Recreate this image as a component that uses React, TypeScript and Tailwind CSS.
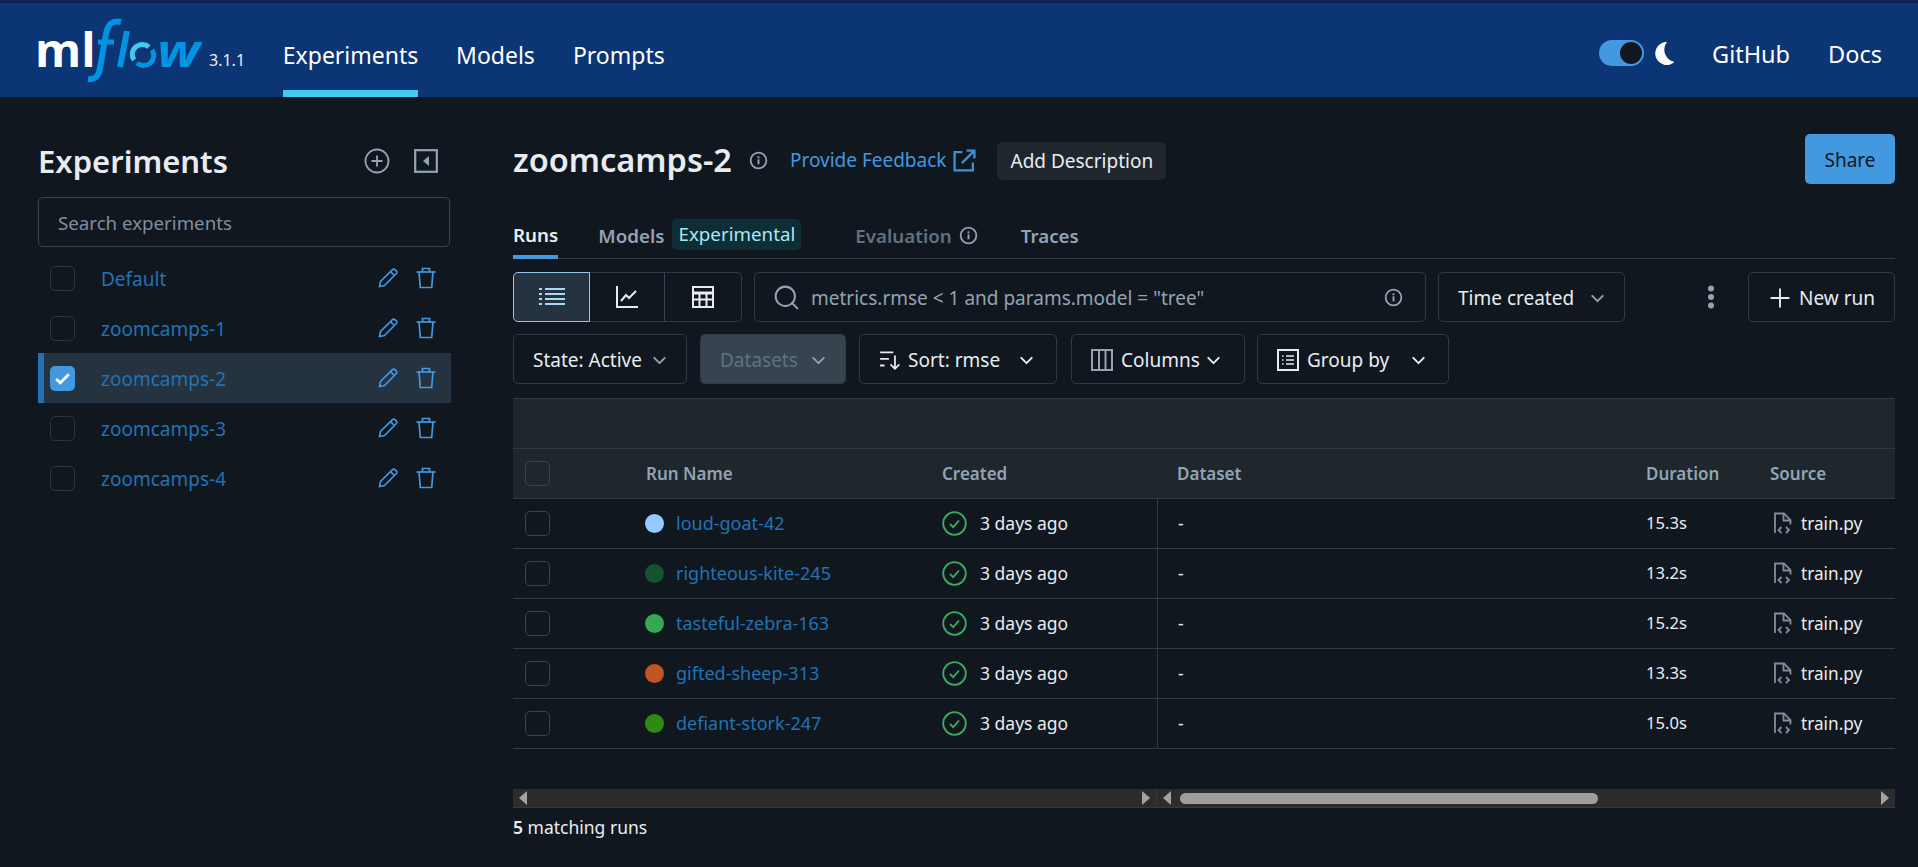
import React from 'react';
import { ChevronDown, Plus, Search } from 'lucide-react';

const FONT = "font-['Noto_Sans','Open_Sans',sans-serif]";

const experiments = ['Default', 'zoomcamps-1', 'zoomcamps-2', 'zoomcamps-3', 'zoomcamps-4'];

const runs = [
  { name: 'loud-goat-42', color: '#93c9ff', duration: '15.3s' },
  { name: 'righteous-kite-245', color: '#14532d', duration: '13.2s' },
  { name: 'tasteful-zebra-163', color: '#34a853', duration: '15.2s' },
  { name: 'gifted-sheep-313', color: '#c2541f', duration: '13.3s' },
  { name: 'defiant-stork-247', color: '#2f8a12', duration: '15.0s' },
];

const Logo = () => (
  <svg width="172" height="70" viewBox="30 15 172 70" className="shrink-0">
    <text x="34" y="67" fill="#fff" fontFamily="Open Sans" fontWeight="700" fontSize="47">ml</text>
    <path d="M120 22c-9-2-13 2-15 12l-6 34c-1 8-5 12-12 11" fill="none" stroke="#0194e2" strokeWidth="6" />
    <path d="M97 42h16" fill="none" stroke="#0194e2" strokeWidth="5" />
    <path d="M126 31l-7 36" fill="none" stroke="#0194e2" strokeWidth="6" />
    <path d="M133 60a10 10 0 0 1 15-13" fill="none" stroke="#43c9ed" strokeWidth="5" />
    <path d="M151 50a10 10 0 0 1-15 13" fill="none" stroke="#0194e2" strokeWidth="5" />
    <text x="156" y="67" fill="#0194e2" fontFamily="Open Sans" fontStyle="italic" fontWeight="700" fontSize="44" textLength="43" lengthAdjust="spacingAndGlyphs">w</text>
  </svg>
);

const InfoIcon = ({ className }: { className?: string }) => (
  <svg viewBox="0 0 16 16" className={className} fill="none">
    <circle cx="8" cy="8" r="6.6" stroke="currentColor" strokeWidth="1.5" />
    <rect x="7.2" y="7" width="1.6" height="4.2" fill="currentColor" />
    <rect x="7.2" y="4.5" width="1.6" height="1.6" fill="currentColor" />
  </svg>
);

const PencilIcon = () => (
  <svg viewBox="0 0 20 20" className="w-[20px] h-[20px] text-[#4299e0]" fill="none" stroke="currentColor" strokeWidth="1.6">
    <path d="M1.5 18.5l1-5L14.5 1.6c.7-.7 1.7-.7 2.4 0l1.5 1.5c.7.7.7 1.7 0 2.4L6.5 17.5z" />
    <path d="M12.5 3.6l3.9 3.9" />
  </svg>
);

const TrashIcon = () => (
  <svg viewBox="0 0 20 22" className="w-[20px] h-[22px] text-[#4299e0]" fill="none" stroke="currentColor" strokeWidth="1.7">
    <path d="M0.5 5h19" />
    <path d="M6.5 5V1.5h7V5" />
    <path d="M3 5l1.3 15.5h11.4L17 5" />
  </svg>
);

const Checkbox = ({ checked, table }: { checked?: boolean; table?: boolean }) =>
  checked ? (
    <span className="flex items-center justify-center w-[25px] h-[25px] rounded-[5px] bg-[#4299e0] shrink-0">
      <svg viewBox="0 0 16 16" className="w-[17px] h-[17px]" fill="none" stroke="#fff" strokeWidth="2.6">
        <path d="M2 8.5l4 3.5 8-8" />
      </svg>
    </span>
  ) : (
    <span className={`block w-[25px] h-[25px] rounded-[5px] border shrink-0 ${table ? 'border-[#37444f] border-[1.5px]' : 'border-[#2c353e]'}`} />
  );

const SortIcon = () => (
  <svg viewBox="0 0 20 20" className="w-[22px] h-[22px] text-[#e8ecf0]" fill="none" stroke="currentColor" strokeWidth="1.6">
    <path d="M1 3h12M1 9h8M1 15h4" />
    <path d="M14.5 6v12M10.5 14l4 4 4-4" />
  </svg>
);

const ColumnsIcon = () => (
  <svg viewBox="0 0 22 22" className="w-[22px] h-[22px] text-[#92a4b3]" fill="none" stroke="currentColor" strokeWidth="2">
    <rect x="1" y="1" width="20" height="20" />
    <path d="M8 1v20M14.5 1v20" />
  </svg>
);

const GroupIcon = () => (
  <svg viewBox="0 0 22 22" className="w-[22px] h-[22px] text-[#e8ecf0]" fill="none" stroke="currentColor" strokeWidth="2">
    <rect x="1" y="1" width="20" height="20" />
    <path d="M9 7h8M9 11h8M9 15h8M5 7h1.5M5 11h1.5M5 15h1.5" strokeWidth="1.6" />
  </svg>
);

const FileCodeIcon = () => (
  <svg viewBox="0 0 19 22" className="w-[19px] h-[22px] text-[#7d8f9e]" fill="none" stroke="currentColor" strokeWidth="1.8">
    <path d="M2 21V1.5h9l6.5 6.5v4.5" />
    <path d="M10.5 1.5v7h7" />
    <path d="M8.5 15l-3 3 3 3M13 15l3 3-3 3" />
  </svg>
);

const StatusIcon = () => (
  <svg viewBox="0 0 25 25" className="w-[25px] h-[25px] text-[#3caa60]" fill="none" stroke="currentColor">
    <circle cx="12.5" cy="12.5" r="11.3" strokeWidth="1.8" />
    <path d="M8 13l3.2 3.2L17 9.5" strokeWidth="1.8" />
  </svg>
);

const ToolButton = ({ width, children, disabled }: { width: string; children: React.ReactNode; disabled?: boolean }) => (
  <div
    className={`${width} h-[50px] shrink-0 flex items-center rounded-[5px] border border-[#2e3a45] px-[19px] pt-[2px] text-[19px] ${
      disabled ? 'bg-[#37444f] text-[#5f7281]' : 'text-[#e8ecf0]'
    }`}
  >
    {children}
  </div>
);

const Chevron = ({ className = '' }: { className?: string }) => (
  <ChevronDown className={`w-[21px] h-[21px] shrink-0 ${className}`} strokeWidth={2.2} />
);

const ScrollArrow = ({ left }: { left?: boolean }) => (
  <span
    className={`block w-0 h-0 border-y-[7px] border-y-transparent ${
      left ? 'border-r-[8px] border-r-[#a3a3a3]' : 'border-l-[8px] border-l-[#a3a3a3]'
    }`}
  />
);

export default function App() {
  return (
    <div className={`${FONT} w-[1918px] h-[867px] overflow-hidden bg-[#11171f] text-[19px] text-[#e8ecf0]`}>
      <header className="h-[97px] border-t-[3px] border-[#121d52] bg-[#0b3574] flex items-stretch pl-[31px] pr-[36px] text-white">
        <div className="flex items-center">
          <Logo />
          <span className="ml-[6px] mt-[20px] text-[16px] text-[#e8ecf0]">3.1.1</span>
        </div>
        <nav className="flex ml-[38px] text-[23px]">
          <a className="w-[135px] flex items-center justify-center border-b-[7px] border-[#43c9ed] pt-[17px]">Experiments</a>
          <a className="ml-[38px] flex items-center pt-[10px]">Models</a>
          <a className="ml-[38px] flex items-center pt-[10px]">Prompts</a>
        </nav>
        <div className="ml-auto flex items-center text-[23.5px] pt-[6px]">
          <span className="relative block w-[45px] h-[26px] rounded-full bg-[#4299e0]">
            <span className="absolute right-[2px] top-[2px] w-[22px] h-[22px] rounded-full bg-[#11171f]" />
          </span>
          <svg viewBox="0 0 20 24" className="ml-[11px] w-[20px] h-[24px]">
            <path d="M12 1a11.5 11.5 0 1 0 7.5 20A12.5 12.5 0 0 1 12 1z" fill="#fff" />
          </svg>
          <a className="ml-[37px] pt-[4px]">GitHub</a>
          <a className="ml-[38px] pt-[4px]">Docs</a>
        </div>
      </header>

      <div className="flex">
        <aside className="w-[513px] shrink-0 pl-[38px] pt-[37px]">
          <div className="w-[412px] flex items-center h-[63px] pb-[9px]">
            <h1 className="text-[31px] font-semibold leading-none">Experiments</h1>
            <svg viewBox="0 0 26 26" className="ml-auto w-[26px] h-[26px] text-[#92a4b3]" fill="none" stroke="currentColor" strokeWidth="1.8">
              <circle cx="13" cy="13" r="11.5" />
              <path d="M13 7.5v11M7.5 13h11" />
            </svg>
            <svg viewBox="0 0 24 24" className="ml-[24px] mr-[12px] w-[24px] h-[24px] text-[#92a4b3]" fill="none">
              <rect x="1.2" y="1.2" width="21.6" height="21.6" stroke="currentColor" strokeWidth="2.2" />
              <path d="M15 7v10l-6-5z" fill="currentColor" />
            </svg>
          </div>
          <div className="w-[412px] h-[50px] rounded-[5px] border border-[#37444f] flex items-center px-[19px] pt-[2px] text-[18.7px] text-[#7d8f9e]">
            Search experiments
          </div>
          <ul className="mt-[6px] w-[413px]">
            {experiments.map((name) => {
              const selected = name === 'zoomcamps-2';
              return (
                <li
                  key={name}
                  className={`h-[50px] flex items-center pl-[6px] border-l-[6px] ${
                    selected ? 'border-[#2272b4] bg-[#24333f]' : 'border-transparent'
                  }`}
                >
                  <Checkbox checked={selected} />
                  <span className="ml-[26px] pt-[2px] text-[#2272b4]">{name}</span>
                  <span className="ml-auto flex items-center gap-[18px] pr-[15px]">
                    <PencilIcon />
                    <TrashIcon />
                  </span>
                </li>
              );
            })}
          </ul>
        </aside>

        <main className="flex-1 pr-[23px] pt-[37px] min-w-0">
          <div className="flex items-start h-[83px]">
            <div className="flex items-center h-[50px] pt-[3px]">
              <h2 className="text-[32.5px] font-semibold leading-none whitespace-nowrap">zoomcamps-2</h2>
              <InfoIcon className="ml-[17px] w-[19px] h-[19px] text-[#92a4b3]" />
              <a className="ml-[22px] text-[19px] text-[#4299e0] whitespace-nowrap">Provide Feedback</a>
              <svg viewBox="0 0 22 22" className="ml-[7px] w-[23px] h-[23px] text-[#3d8fd6]" fill="none" stroke="currentColor" strokeWidth="2.2">
                <path d="M9 3H1.5v17.5H19V13" />
                <path d="M8.5 13.5L20 2M13 1.5h7.5V9" />
              </svg>
              <span className="ml-[21px] h-[38px] flex items-center px-[13px] pt-[2px] rounded-[5px] bg-[#1f272d] whitespace-nowrap">
                Add Description
              </span>
            </div>
            <div className="ml-auto w-[90px] h-[50px] pt-[2px] flex items-center justify-center rounded-[5px] bg-[#4299e0] text-[#11171f]">
              Share
            </div>
          </div>

          <div className="h-[42px] flex items-stretch border-b border-[#2e3a45] text-[18.75px] font-semibold text-[#92a4b3]">
            <span className="text-[#e8ecf0] border-b-[4px] border-[#4299e0] -mb-px flex items-center pb-[2px]">Runs</span>
            <span className="ml-[40px] flex items-center pb-[2px]">Models</span>
            <span className="ml-[8px] my-auto h-[31px] mb-[8px] flex items-center px-[6px] rounded-[5px] bg-[#0f2d35] text-[#a3eaf7] font-normal">
              Experimental
            </span>
            <span className="ml-[54px] flex items-center pb-[2px] text-[#5f7281]">Evaluation</span>
            <InfoIcon className="ml-[7px] mt-[9px] w-[19px] h-[19px] text-[#92a4b3]" />
            <span className="ml-[43px] flex items-center pb-[2px]">Traces</span>
          </div>

          <div className="mt-[13px] flex items-center">
            <div className="flex h-[50px] w-[229px] shrink-0 rounded-[5px] border border-[#2e3a45]">
              <span className="w-[77px] -ml-px -my-px flex items-center justify-center rounded-l-[5px] border border-[#8fc7ee] bg-[#24333f]">
                <svg viewBox="0 0 26 20" className="w-[26px] h-[20px] text-[#a8d8f8]" fill="none" stroke="currentColor" strokeWidth="2">
                  <path d="M6 2h20M6 7h20M6 12h20M6 17h20M0 2h3M0 7h3M0 12h3M0 17h3" />
                </svg>
              </span>
              <span className="w-[75px] flex items-center justify-center border-r border-[#37444f]">
                <svg viewBox="0 0 24 24" className="w-[24px] h-[24px]" fill="none" stroke="currentColor" strokeWidth="2">
                  <path d="M2 1v21h21M6 16l5-6 3 3 7-7" />
                </svg>
              </span>
              <span className="flex-1 flex items-center justify-center">
                <svg viewBox="0 0 24 24" className="w-[24px] h-[24px]" fill="none" stroke="currentColor" strokeWidth="2">
                  <rect x="2" y="2" width="20" height="20" />
                  <path d="M2 8h20" strokeWidth="3" />
                  <path d="M2 14.5h20M8.5 8v14M15.5 8v14" />
                </svg>
              </span>
            </div>
            <div className="ml-[12px] w-[672px] h-[50px] shrink-0 flex items-center rounded-[5px] border border-[#2e3a45] pl-[17px] pr-[22px] text-[#92a4b3]">
              <Search className="w-[29px] h-[29px] text-[#92a4b3] shrink-0" strokeWidth={1.7} />
              <span className="ml-[10px] pt-[2px] whitespace-nowrap">metrics.rmse &lt; 1 and params.model = "tree"</span>
              <InfoIcon className="ml-auto w-[19px] h-[19px]" />
            </div>
            <ToolButton width="ml-[12px] w-[187px]">
              <span className="whitespace-nowrap">Time created</span>
              <Chevron className="ml-auto -mr-[3px] text-[#92a4b3]" />
            </ToolButton>
            <svg viewBox="0 0 8 24" className="ml-auto mr-[33px] w-[8px] h-[24px] text-[#92a4b3]" fill="currentColor">
              <circle cx="4" cy="3.5" r="3" />
              <circle cx="4" cy="12" r="3" />
              <circle cx="4" cy="20.5" r="3" />
            </svg>
            <ToolButton width="w-[147px]">
              <Plus className="w-[30px] h-[30px] -ml-[3px] shrink-0" strokeWidth={1.5} />
              <span className="ml-[4px] whitespace-nowrap">New run</span>
            </ToolButton>
          </div>

          <div className="mt-[12px] flex items-center">
            <ToolButton width="w-[174px]">
              <span className="whitespace-nowrap">State: Active</span>
              <Chevron className="ml-auto -mr-[3px] text-[#92a4b3]" />
            </ToolButton>
            <ToolButton width="ml-[13px] w-[146px]" disabled>
              <span>Datasets</span>
              <Chevron className="ml-auto -mr-[3px] text-[#92a4b3]" />
            </ToolButton>
            <ToolButton width="ml-[13px] w-[198px]">
              <SortIcon />
              <span className="ml-[7px] whitespace-nowrap">Sort: rmse</span>
              <Chevron className="ml-auto" />
            </ToolButton>
            <ToolButton width="ml-[14px] w-[174px]">
              <ColumnsIcon />
              <span className="ml-[8px]">Columns</span>
              <Chevron className="ml-[3px]" />
            </ToolButton>
            <ToolButton width="ml-[12px] w-[192px]">
              <GroupIcon />
              <span className="ml-[8px] whitespace-nowrap">Group by</span>
              <Chevron className="ml-auto" />
            </ToolButton>
          </div>

          <div className="mt-[14px]">
            <div className="h-[51px] bg-[#1f272d] border-y border-[#2e3a45]" />
            <div className="grid grid-cols-[133px_296px_215px_489px_124px_125px] h-[50px] bg-[#1f272d] border-b border-[#2e3a45] items-center text-[17px] font-semibold text-[#92a4b3]">
              <span className="pl-[12px]"><Checkbox table /></span>
              <span>Run Name</span>
              <span>Created</span>
              <span className="pl-[20px]">Dataset</span>
              <span>Duration</span>
              <span>Source</span>
            </div>
            {runs.map((run) => (
              <div
                key={run.name}
                className="grid grid-cols-[133px_296px_215px_489px_124px_125px] h-[50px] border-b border-[#2e3a45] items-center text-[17.5px]"
              >
                <span className="pl-[12px]"><Checkbox table /></span>
                <span className="flex items-center">
                  <span className="w-[19px] h-[19px] -ml-px rounded-full" style={{ backgroundColor: run.color }} />
                  <a className="ml-[12px] text-[18px] text-[#2272b4] whitespace-nowrap">{run.name}</a>
                </span>
                <span className="flex items-center">
                  <StatusIcon />
                  <span className="ml-[13px] whitespace-nowrap">3 days ago</span>
                </span>
                <span className="h-full flex items-center pl-[20px] border-l border-[#2e3a45]">-</span>
                <span className="text-[16.6px]">{run.duration}</span>
                <span className="flex items-center pl-[3px]">
                  <FileCodeIcon />
                  <span className="ml-[9px] text-[17.2px] whitespace-nowrap">train.py</span>
                </span>
              </div>
            ))}
            <div className="mt-[40px] h-[19px] flex border-b border-[#2e3a45]">
              <div className="w-[644px] bg-[#2c2c2c] flex items-center justify-between px-[6px] border-r border-[#2e3a45]">
                <ScrollArrow left />
                <ScrollArrow />
              </div>
              <div className="flex-1 bg-[#2c2c2c] flex items-center pl-[6px] pr-[6px]">
                <ScrollArrow left />
                <span className="ml-[9px] w-[418px] h-[11px] rounded-full bg-[#9e9e9e]" />
                <span className="ml-auto"><ScrollArrow /></span>
              </div>
            </div>
            <p className="mt-[6px] text-[17.5px]"><span className="font-semibold">5</span> matching runs</p>
          </div>
        </main>
      </div>
    </div>
  );
}
